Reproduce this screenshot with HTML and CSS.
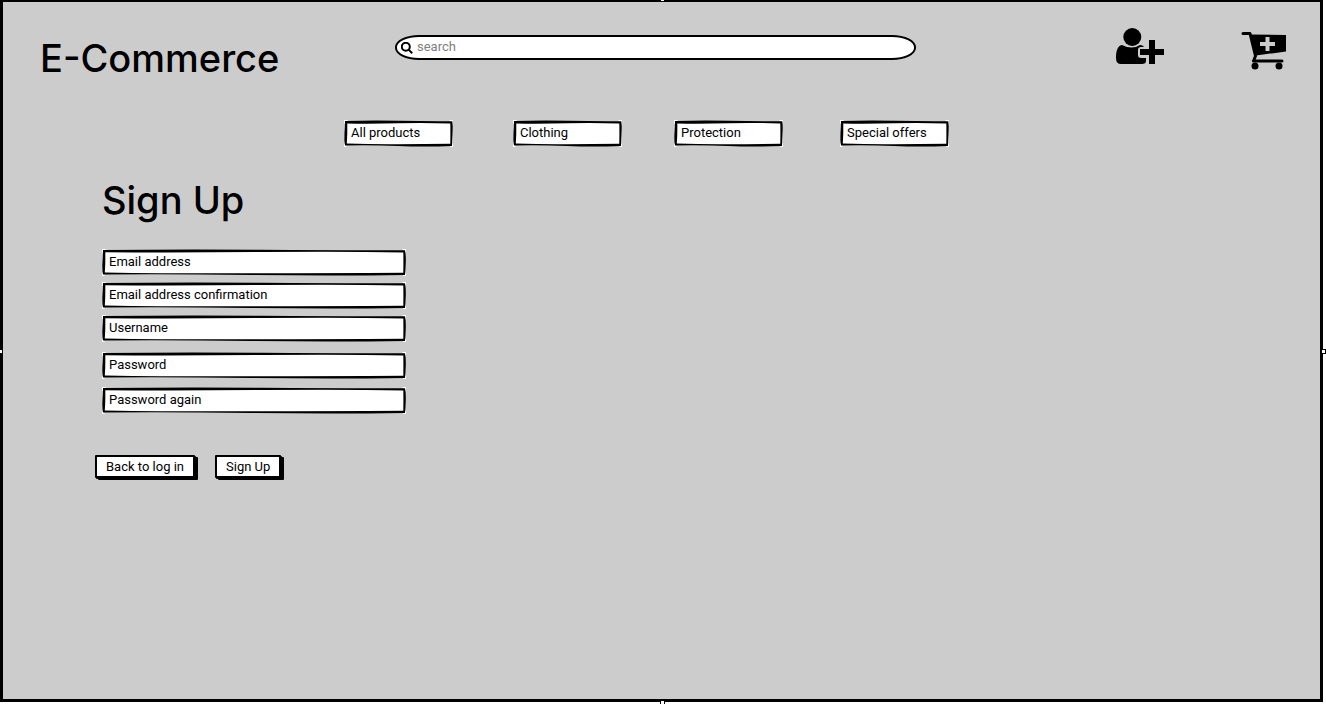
FILE: index.html
```html
<!DOCTYPE html>
<html lang="en">
<head>
<meta charset="utf-8">
<title>E-Commerce - Sign Up</title>
<link rel="stylesheet" href="styles.css">
</head>
<body>
<svg class="defs" aria-hidden="true">
  <symbol id="sketch" viewBox="0 0 304 27" preserveAspectRatio="none">
    <path fill="#fff" d="M0 0H4L2 4H0ZM300 0H304V4ZM0 23 3 27H0ZM301 27H304V23Z"/>
    <path fill="#fff" d="M2 2H302V25H2Z"/>
    <path fill="#000" fill-rule="evenodd" d="M1 1Q80 .2 160 .8T303 1.200Q304 6 303.800 13T303 26Q230 27 150 26T1 25.500Q0 20 .5 13T1 1ZM3.300 3.300Q80 3.800 160 3T301.300 3.400Q301.500 10 301.300 23.700Q230 24 150 24.300T2.800 23.400Q3.500 15 3.300 3.300Z"/>
  </symbol>
  <symbol id="sketch-short" viewBox="0 0 109 27" preserveAspectRatio="none">
    <path fill="#fff" d="M0 0H4L2 4H0ZM105 0H109V4ZM0 23 3 27H0ZM106 27H109V23Z"/>
    <path fill="#fff" d="M2 2H107V25H2Z"/>
    <path fill="#000" fill-rule="evenodd" d="M1 1Q28 .2 55 .8T108.300 1.200Q109 6 108.500 13T108 26Q80 27 54 26T1 25.500Q0 20 .5 13T1 1ZM3.300 3.500Q28 4 55 3.200T106.300 3.600Q106.500 10 106.300 23.700Q80 24 54 24.200T2.800 23.400Q3.500 15 3.300 3.500Z"/>
  </symbol>
</svg>
<div class="frame">
  <header class="header">
    <h1 class="title brand">E-Commerce</h1>
    <form class="search">
      <svg class="search-icon" viewBox="0 0 12 12" aria-hidden="true"><circle cx="4.800" cy="4.800" r="4"/><path d="M7.600 7.600 11.200 11.200"/></svg>
      <input type="search" placeholder="search" aria-label="search">
    </form>
    <a class="account" href="#" aria-label="Sign up">
      <svg width="50" height="38" viewBox="0 0 50 38">
        <path d="M7 17C2 18 1 24 1 30Q1 36 6 36H27Q31 36 31 33V30H26Q23 30 23 27V22Q23 19 26 19H29Q28 17 25 17Q17 22 7 17Z"/>
        <circle cx="17.300" cy="9" r="9"/>
        <path d="M34 12H40V21H49V27H40V36H34V27H25V21H34Z"/>
      </svg>
    </a>
    <a class="cart" href="#" aria-label="Add to cart">
      <svg width="46" height="40" viewBox="0 0 46 40">
        <path fill-rule="evenodd" d="M9 3.500 45 4V20.500L15 24.500ZM24.500 6V11H19V15H24.500V20H28.500V15H34V11H28.500V6Z"/>
        <path class="line" d="M2 2.500H9L14.500 25 12.500 30H41"/>
        <circle cx="14" cy="35" r="3.500"/><circle cx="38" cy="35" r="3.500"/>
      </svg>
    </a>
  </header>
  <nav class="nav">
    <a class="box" href="#"><svg class="outline" aria-hidden="true"><use href="#sketch-short"/></svg><span>All products</span></a>
    <a class="box clothing" href="#"><svg class="outline" aria-hidden="true"><use href="#sketch-short"/></svg><span>Clothing</span></a>
    <a class="box protection" href="#"><svg class="outline" aria-hidden="true"><use href="#sketch-short"/></svg><span>Protection</span></a>
    <a class="box offers" href="#"><svg class="outline" aria-hidden="true"><use href="#sketch-short"/></svg><span>Special offers</span></a>
  </nav>
  <main class="main">
    <h2 class="title">Sign Up</h2>
    <form>
      <div class="fields">
        <div class="box"><svg class="outline" aria-hidden="true"><use href="#sketch"/></svg><input type="email" placeholder="Email address" aria-label="Email address"></div>
        <div class="box"><svg class="outline" aria-hidden="true"><use href="#sketch"/></svg><input type="email" placeholder="Email address confirmation" aria-label="Email address confirmation"></div>
        <div class="box"><svg class="outline" aria-hidden="true"><use href="#sketch"/></svg><input type="text" placeholder="Username" aria-label="Username"></div>
        <div class="box password"><svg class="outline" aria-hidden="true"><use href="#sketch"/></svg><input type="password" placeholder="Password" aria-label="Password"></div>
        <div class="box again"><svg class="outline" aria-hidden="true"><use href="#sketch"/></svg><input type="password" placeholder="Password again" aria-label="Password again"></div>
      </div>
      <div class="actions">
        <button type="button">Back to log in</button>
        <button type="submit">Sign Up</button>
      </div>
    </form>
  </main>
  <i class="handle top"></i><i class="handle left"></i><i class="handle right"></i><i class="handle bottom"></i>
</div>
</body>
</html>
```
FILE: styles.css
```css
* { box-sizing: border-box; }
body {
  margin: 0;
  padding: 0 3px 2px 0;
  background: #fff;
  color: #000;
  font: 13px/16px Roboto, sans-serif;
}
input, button { font: inherit; color: inherit; }
.defs { position: absolute; width: 0; height: 0; }
.frame {
  position: relative;
  min-height: calc(100vh - 2px);
  border: 3px solid #000;
  border-top-width: 2px;
  background: #ccc;
}
.title {
  margin: 0;
  font: 500 38px/48px Inter, sans-serif;
}
.header { display: flex; align-items: flex-start; padding: 26px 33px 0 37px; }
.brand { flex: 0 0 355px; padding-top: 6px; }
.search {
  display: flex;
  flex: 1;
  align-items: center;
  gap: 4px;
  height: 25px;
  margin-top: 7px;
  padding: 0 16px 0 4px;
  border: 2px solid #000;
  border-radius: 24px / 12px;
  background: #fff;
}
.search-icon { width: 12px; height: 12px; fill: none; stroke: #000; stroke-width: 2; }
.search input { flex: 1; min-width: 0; padding: 0 0 2px; border: 0; outline: 0; background: none; }
.search input::placeholder { color: #808080; opacity: 1; }
.account { margin-left: 199px; }
.cart { margin: 3px 0 0 76px; }
.header a { line-height: 0; color: #000; }
.line { fill: none; stroke: #000; stroke-width: 3; stroke-linecap: round; stroke-linejoin: round; }
.nav { display: flex; padding: 38px 20px 0 341px; }
.box { position: relative; display: block; height: 27px; color: #000; text-decoration: none; }
.outline { position: absolute; inset: 0; width: 100%; height: 100%; }
.nav .box { width: 109px; padding: 5px 7px; white-space: nowrap; }
.box span, .box input { position: relative; }
.clothing { margin-left: 60px; }
.protection { margin-left: 52px; }
.offers { margin-left: 57px; }
.main { padding: 29px 20px 0 99px; }
.fields { display: flex; flex-direction: column; gap: 6px; max-width: 304px; margin-top: 25px; }
.fields input { display: block; width: 100%; height: 24px; padding: 0 7px; border: 0; outline: 0; background: none; }
.fields input::placeholder { color: #000; opacity: 1; }
.password { margin-top: 4px; }
.again { margin-top: 2px; }
.actions { display: flex; gap: 20px; margin: 41px 0 0 -7px; }
.actions button {
  height: 23px;
  padding: 1px 9px 0;
  border: 2px solid #000;
  border-radius: 1px;
  background: #fff;
  box-shadow: 1px 1px #000, 3px 2px #000;
}
.handle { position: absolute; width: 5px; height: 5px; border: 1px solid #000; background: #fff; }
.handle.top { top: -5px; left: calc(50% - 2px); }
.handle.left { top: calc(50% - 2px); left: -5px; }
.handle.right { top: calc(50% - 2px); right: -6px; }
.handle.bottom { bottom: -6px; left: calc(50% - 2px); }
```
